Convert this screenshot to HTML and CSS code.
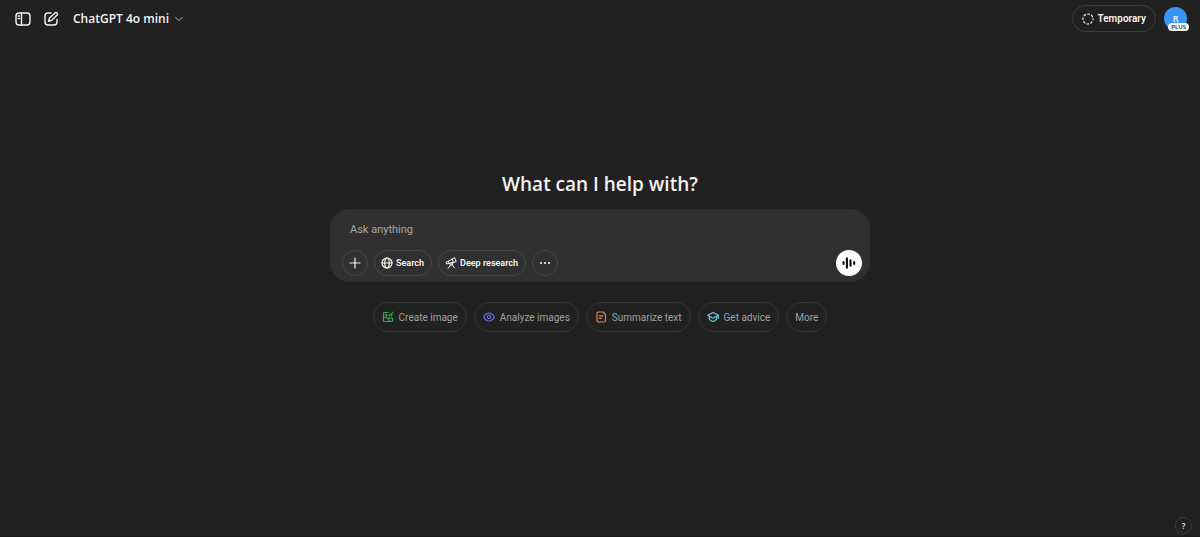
FILE: index.html
```html
<!DOCTYPE html>
<html lang="en">
<head>
    <meta charset="UTF-8">
    <meta name="viewport" content="width=device-width, initial-scale=1">
    <title>ChatGPT</title>
    <link rel="stylesheet" href="styles.css">
</head>
<body>

<header class="topbar">
    <div class="topbar-left">
        <button class="icon-button" type="button" aria-label="Open sidebar">
            <svg class="icon-large" viewBox="0 0 16 16">
                <rect x="1" y="2" width="14" height="12" rx="3"/>
                <path d="M6.5 2v12M3.2 5h1.3M3.2 7.5h1.3"/>
            </svg>
        </button>
        <button class="icon-button" type="button" aria-label="New chat">
            <svg class="icon-large" viewBox="0 0 16 16">
                <path d="M8 2H5a3 3 0 0 0-3 3v6a3 3 0 0 0 3 3h6a3 3 0 0 0 3-3V8.500"/>
                <path d="M12 1.900a1.500 1.500 0 0 1 2.100 2.100L8.800 9.300l-3.300 1 1-3.300z"/>
            </svg>
        </button>
        <button class="model-button" type="button">
            ChatGPT 4o mini
            <svg class="chevron" viewBox="0 0 8 8"><path d="M.7 2.300 4 5.600l3.300-3.300"/></svg>
        </button>
    </div>
    <div class="topbar-right">
        <button class="temporary-button" type="button">
            <svg class="icon" viewBox="0 0 12 12"><circle cx="6" cy="6" r="5" stroke-linecap="butt" stroke-dasharray="2.500 1.427" stroke-dashoffset="1.250"/></svg>
            Temporary
        </button>
        <button class="avatar" type="button" aria-label="Account">
            R
            <span class="plan">PLUS</span>
        </button>
    </div>
</header>

<main class="content">
    <h1>What can I help with?</h1>

    <form class="composer">
        <input class="prompt" type="text" placeholder="Ask anything" aria-label="Ask anything">
        <div class="tools">
            <button class="tool round" type="button" aria-label="Add files">
                <svg class="icon" viewBox="0 0 12 12"><path d="M6 1v10M1 6h10"/></svg>
            </button>
            <button class="tool" type="button">
                <svg class="icon" viewBox="0 0 12 12">
                    <circle cx="6" cy="6" r="5"/>
                    <ellipse cx="6" cy="6" rx="2.200" ry="5"/>
                    <path d="M1 6h10"/>
                </svg>
                Search
            </button>
            <button class="tool" type="button">
                <svg class="icon thin" viewBox="0 0 12 12">
                    <path d="M7.300 1.700 9.700.8l1.500 3.700-2.400 1z"/>
                    <path d="M7.500 2.100 3.300 4l1 2.600L8.600 5"/>
                    <path d="M3.400 4.200 1 5.300l.6 1.700 2.600-.8"/>
                    <circle cx="6.300" cy="7" r="1.200"/>
                    <path d="M5.500 8 3.200 11.300M7.200 7.800l2.200 3.100"/>
                </svg>
                Deep research
            </button>
            <button class="tool round" type="button" aria-label="More tools">
                <svg class="icon dots" viewBox="0 0 12 12"><circle cx="2" cy="6" r="1.100"/><circle cx="6" cy="6" r="1.100"/><circle cx="10" cy="6" r="1.100"/></svg>
            </button>
            <button class="voice" type="button" aria-label="Use voice mode">
                <svg viewBox="0 0 14 14"><path d="M1.500 6v2M4.900 2.200v9.600M8.500 4.200v5.600M12.200 6v2"/></svg>
            </button>
        </div>
    </form>

    <div class="suggestions">
        <button class="chip" type="button">
            <svg class="icon green" viewBox="0 0 12 12">
                <path d="M6 1.500H2.500a1 1 0 0 0-1 1v7a1 1 0 0 0 1 1h7a1 1 0 0 0 1-1V7.500"/>
                <path d="M1.500 6.500c3-.9 5 1 6 4M6.300 7.700c1-.9 2.500-1 4.200-.4"/>
                <circle cx="4.300" cy="4.200" r=".6"/>
                <path d="M9.300.8C9.200 2.900 8.500 3.500 6.600 3.600c1.900.1 2.600.8 2.700 2.700.1-1.900.8-2.600 2.600-2.700C10.100 3.500 9.400 2.900 9.300.8z" fill="currentColor" stroke="none"/>
                <path d="M10.800 1.200v.4M7.200 4.600h.4"/>
            </svg>
            Create image
        </button>
        <button class="chip" type="button">
            <svg class="icon violet" viewBox="0 0 12 12">
                <path d="M.7 6C3.300.7 8.700.7 11.300 6 8.700 11.300 3.300 11.300.7 6z"/>
                <circle cx="6" cy="6" r="1.700"/>
            </svg>
            Analyze images
        </button>
        <button class="chip" type="button">
            <svg class="icon orange" viewBox="0 0 12 12">
                <path d="M3.500 1H8l2.500 2.500v6A1.500 1.500 0 0 1 9 11H3.500A1.500 1.500 0 0 1 2 9.500v-7A1.500 1.500 0 0 1 3.500 1z"/>
                <path d="M4.400 4.800h3.400M4.400 7.300h2.300"/>
            </svg>
            Summarize text
        </button>
        <button class="chip" type="button">
            <svg class="icon cyan" viewBox="0 0 12 12">
                <path d="M6 1.500.7 4.300 6 7.200l5.300-2.900z"/>
                <path d="M2.300 5.500v2.700C4.500 11 7.500 11 9.700 8.200V5.500M11.300 4.300v3"/>
            </svg>
            Get advice
        </button>
        <button class="chip" type="button">More</button>
    </div>
</main>

<footer class="footer">
    <button class="help" type="button" aria-label="Help">?</button>
</footer>

</body>
</html>
```
FILE: styles.css
```css
* {
    box-sizing: border-box;
}

body {
    margin: 0;
    min-height: 100vh;
    display: flex;
    flex-direction: column;
    border-bottom: 1px solid #1b191a;
    background-color: #212121;
    color: #f3f3f3;
    font-family: "Open Sans", "Noto Sans", sans-serif;
}

button {
    display: flex;
    align-items: center;
    justify-content: center;
    flex-shrink: 0;
    padding: 0;
    border: none;
    background: none;
    color: inherit;
    font-family: inherit;
    white-space: nowrap;
    cursor: pointer;
}

svg {
    flex-shrink: 0;
    fill: none;
    stroke: currentColor;
    stroke-linecap: round;
    stroke-linejoin: round;
}

.icon {
    width: 12px;
    height: 12px;
    stroke-width: 1.2;
}

.thin {
    stroke-width: 1;
}

.icon-large {
    width: 16px;
    height: 16px;
    stroke-width: 1.4;
}

/* Top bar */
.topbar {
    display: flex;
    align-items: center;
    justify-content: space-between;
    height: 37px;
    padding: 0 13px 0 9px;
}

.topbar-left, .topbar-right {
    display: flex;
    align-items: center;
}

.topbar-right {
    gap: 8px;
}

.icon-button {
    width: 28px;
    height: 28px;
}

.model-button {
    gap: 6px;
    padding: 0 8px;
    font-size: 12px;
    font-weight: 600;
}

.chevron {
    width: 8px;
    height: 8px;
    color: #b4b4b4;
}

.temporary-button, .tool, .chip, .prompt {
    font-family: Roboto, "Noto Sans", sans-serif;
}

.temporary-button {
    gap: 4px;
    height: 27px;
    padding: 0 9px;
    border: 1px solid #3d3d3d;
    border-radius: 14px;
    font-size: 10px;
    font-weight: 600;
}

.avatar {
    position: relative;
    width: 23px;
    height: 23px;
    border-radius: 50%;
    background-color: #3795f5;
    font-size: 9px;
    font-weight: 600;
    line-height: 10px;
}

.plan {
    position: absolute;
    right: -2px;
    bottom: -1px;
    padding: 0 3px;
    border-radius: 4px;
    background-color: #f5f5f5;
    color: #222222;
    font-size: 6px;
    line-height: 8px;
}

/* Prompt area */
.content {
    flex: 1;
    display: flex;
    flex-direction: column;
    align-items: center;
    padding: 133px 16px 16px;
}

h1 {
    margin: 0 0 11px;
    font-size: 19px;
    font-weight: 600;
    line-height: 28px;
}

.composer {
    width: 100%;
    max-width: 540px;
    padding: 10px 8px 6px 12px;
    border-radius: 20px;
    background-color: #303030;
}

.prompt {
    display: block;
    width: 100%;
    height: 20px;
    margin-bottom: 11px;
    padding: 0 8px;
    border: none;
    outline: none;
    background: none;
    color: inherit;
    font-size: 11px;
}

.prompt::placeholder {
    color: #a8a8a8;
    opacity: 1;
}

.tools {
    display: flex;
    align-items: center;
    gap: 6px;
}

.tool {
    gap: 3px;
    height: 26px;
    padding: 0 7px 0 6px;
    border: 1px solid #454545;
    border-radius: 13px;
    font-size: 9px;
    font-weight: 600;
}

.round {
    width: 26px;
    padding: 0;
}

.dots {
    fill: currentColor;
    stroke: none;
}

.voice {
    width: 26px;
    height: 26px;
    margin-left: auto;
    border-radius: 50%;
    background-color: #ffffff;
    color: #000000;
}

.voice svg {
    width: 14px;
    height: 14px;
    stroke-width: 2;
}

/* Suggestions */
.suggestions {
    display: flex;
    flex-wrap: wrap;
    justify-content: center;
    gap: 7px;
    margin-top: 20px;
}

.chip {
    gap: 5px;
    height: 30px;
    padding: 0 8px;
    border: 1px solid #343434;
    border-radius: 15px;
    color: #a0a0a0;
    font-size: 10px;
}

.green {
    color: #35ae50;
}

.violet {
    color: #6c6ce0;
}

.orange {
    color: #e2854c;
}

.cyan {
    color: #73cadb;
}

.footer {
    display: flex;
    justify-content: flex-end;
    padding: 0 8px 2px;
}

.help {
    width: 17px;
    height: 17px;
    border: 1px solid #3a3a3a;
    border-radius: 50%;
    font-size: 8px;
    font-weight: 600;
}
```
